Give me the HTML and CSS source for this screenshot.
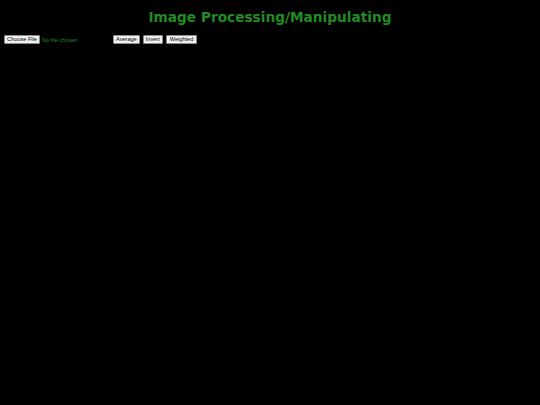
FILE: index.html
```html
<!DOCTYPE html>
<html>
<head>
<meta charset="utf-8">
<title>Image Processing/Manipulating</title>
<link rel="stylesheet" href="styles.css">
</head>
<body>
<h1 class="title">Image Processing/Manipulating</h1>
<div class="controls">
  <label class="file">
    <input type="file" class="file-input" accept="image/*">
    <span class="file-btn">Choose File</span>
    <span class="file-name">No file chosen</span>
  </label>
  <button class="btn">Average</button>
  <button class="btn">Invert</button>
  <button class="btn">Weighted</button>
</div>
<canvas class="canvas"></canvas>
</body>
</html>
```

FILE: styles.css
```css
html, body {
  background: #000;
}
body {
  margin: 4px;
  font-family: "Liberation Sans", Arial, sans-serif;
}
.title {
  margin: 5px 0 0;
  text-align: center;
  font-family: "DejaVu Sans", Verdana, sans-serif;
  font-weight: bold;
  font-size: 13.7px;
  line-height: 16px;
  color: #228b22;
}
.controls {
  display: flex;
  align-items: center;
  margin-top: 10px;
  height: 9px;
}
.file {
  display: flex;
  align-items: center;
  width: 105px;
  margin-right: 4px;
}
.file-input {
  display: none;
}
.file-btn,
.btn {
  box-sizing: border-box;
  height: 9px;
  padding: 0 2px;
  font-family: "Liberation Sans", Arial, sans-serif;
  font-size: 5.6px;
  line-height: 7px;
  white-space: nowrap;
  color: #000;
  background: #f0f0f0;
  border: 1px solid #8a8a8a;
  border-radius: 1px;
  display: inline-flex;
  align-items: center;
  justify-content: center;
}
.file-btn {
  width: 36px;
  padding: 0;
}
.file-name {
  margin-left: 2px;
  font-size: 5.6px;
  white-space: nowrap;
  color: #228b22;
}
.btn {
  margin-right: 3px;
}
.btn:last-child {
  padding: 0 3px;
}
.canvas {
  display: block;
  width: 0;
  height: 0;
}
```
